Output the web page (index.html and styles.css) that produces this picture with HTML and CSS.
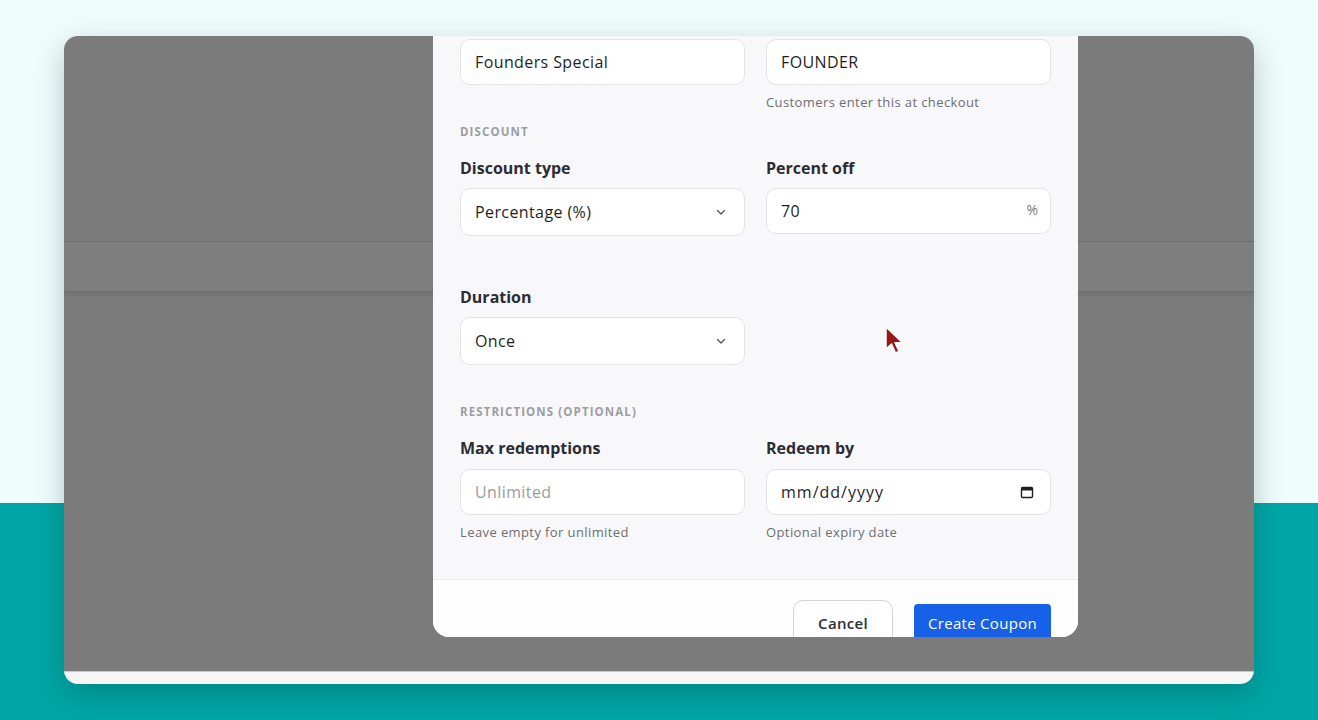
FILE: index.html
```html
<!DOCTYPE html>
<html lang="en">
<head>
  <meta charset="UTF-8" />
  <meta name="viewport" content="width=device-width, initial-scale=1.0"/>
  <title>Create Coupon</title>
  <link rel="stylesheet" href="styles.css">
</head>
<body>
  <div class="window">
    <div class="overlay">
      <div class="page-bar"></div>
    </div>
    <div class="window-foot"></div>

    <div class="modal">
      <div class="modal-body">
        <div class="grid">
          <div class="field">
            <input class="input" type="text" value="Founders Special" />
          </div>
          <div class="field">
            <input class="input" type="text" value="FOUNDER" />
            <p class="hint">Customers enter this at checkout</p>
          </div>
        </div>

        <h3 class="section">Discount</h3>
        <div class="grid">
          <div class="field">
            <label>Discount type</label>
            <div class="select">
              <span>Percentage (%)</span>
              <svg class="chev" width="12" height="12" viewBox="0 0 12 12"><path d="M2.5 4.5 6 8l3.5-3.5" fill="none" stroke="#555" stroke-width="1.3" stroke-linecap="round" stroke-linejoin="round"/></svg>
            </div>
          </div>
          <div class="field">
            <label>Percent off</label>
            <div class="suffix-wrap">
              <input class="input" type="text" value="70" />
              <span class="suffix">%</span>
            </div>
          </div>
        </div>

        <div class="grid duration">
          <div class="field">
            <label>Duration</label>
            <div class="select">
              <span>Once</span>
              <svg class="chev" width="12" height="12" viewBox="0 0 12 12"><path d="M2.5 4.5 6 8l3.5-3.5" fill="none" stroke="#555" stroke-width="1.3" stroke-linecap="round" stroke-linejoin="round"/></svg>
            </div>
          </div>
        </div>

        <h3 class="section restrictions">Restrictions (optional)</h3>
        <div class="grid limits">
          <div class="field">
            <label>Max redemptions</label>
            <input class="input" type="text" placeholder="Unlimited" />
            <p class="hint">Leave empty for unlimited</p>
          </div>
          <div class="field">
            <label>Redeem by</label>
            <div class="date">
              <span>mm/dd/yyyy</span>
              <svg width="14" height="14" viewBox="0 0 14 14"><rect x="1.5" y="2.5" width="11" height="10" rx="1.2" fill="none" stroke="#1f1f1f" stroke-width="1.4"/><rect x="1.5" y="2.5" width="11" height="3" fill="#1f1f1f"/></svg>
            </div>
            <p class="hint">Optional expiry date</p>
          </div>
        </div>
      </div>

      <div class="modal-foot">
        <button class="btn btn-cancel">Cancel</button>
        <button class="btn btn-primary">Create Coupon</button>
      </div>
    </div>

    <!-- mouse pointer -->
    <svg class="cursor" width="22" height="30" viewBox="0 0 22 30">
      <path d="M2 1v22l5.5-5 4 9 3.5-1.6-4-8.6h7.5z" fill="#9a1616" stroke="#fff" stroke-width="1.5" stroke-linejoin="round"/>
    </svg>
  </div>
</body>
</html>
```

FILE: styles.css
```css
body {
  margin: 0;
  height: 720px;
  overflow: hidden;
  font-family: "Open Sans", "Noto Sans", Arial, sans-serif;
  background: linear-gradient(#f0fdfd 0, #f0fdfd 503px, #00a6a6 503px);
  padding: 36px 64px 0;
  box-sizing: border-box;
}
.window {
  position: relative;
  height: 648px;
  border-radius: 14px;
  overflow: hidden;
  background: #f6f6f6;
  box-shadow: 0 10px 30px rgba(0,40,40,0.25);
}
.overlay {
  height: 636px;
  background: #7b7b7b;
  border-bottom: 1px solid #c9c9c9;
  padding-top: 205px;
  box-sizing: border-box;
}
.page-bar {
  height: 49px;
  border-top: 1px solid #6c6c6c;
  border-bottom: 1px solid #6e6e6e;
  background: #7e7e7e;
  box-shadow: 0 3px 4px rgba(0,0,0,0.08);
}
.modal {
  position: absolute;
  left: 369px;
  top: 0;
  width: 645px;
  height: 601px;
  background: #f8f8fa;
  border-radius: 0 0 16px 16px;
  overflow: hidden;
}
.modal-body {
  padding: 3px 27px 0;
  height: 543px;
  box-sizing: border-box;
}
.grid {
  display: grid;
  grid-template-columns: 285px 285px;
  column-gap: 21px;
}
.field label {
  display: block;
  font-size: 16px;
  font-weight: 700;
  color: #2b2d33;
  line-height: 20px;
  margin-bottom: 10px;
}
.limits .field label {
  margin-bottom: 11px;
}
.input, .select, .date {
  width: 100%;
  height: 46px;
  box-sizing: border-box;
  border: 1px solid #e3e3e6;
  border-radius: 10px;
  background: #fff;
  padding: 0 14px;
  font-family: inherit;
  font-size: 16px;
  letter-spacing: 0.4px;
  color: #1f1f1f;
  outline: none;
}
.input::placeholder {
  color: #9b9b9b;
}
.select, .date {
  display: flex;
  align-items: center;
  justify-content: space-between;
}
.select {
  height: 48px;
  padding-right: 17px;
}
.date {
  padding-right: 16px;
  letter-spacing: 1px;
}
.suffix-wrap {
  position: relative;
}
.suffix {
  position: absolute;
  right: 13px;
  top: 12px;
  font-size: 14px;
  color: #7a7a7a;
}
.hint {
  margin: 8px 0 0;
  font-size: 13px;
  letter-spacing: 0.4px;
  line-height: 18px;
  color: #6e6e73;
}
.section {
  margin: 13px 0 18px;
  font-size: 11.5px;
  font-weight: 700;
  letter-spacing: 1.1px;
  text-transform: uppercase;
  color: #9d9da3;
  line-height: 16px;
}
.duration {
  margin-top: 51px;
}
.restrictions {
  margin-top: 39px;
  margin-bottom: 18px;
}
.modal-foot {
  border-top: 1px solid #ececee;
  background: #fdfdfd;
  height: 100px;
  display: flex;
  justify-content: flex-end;
  align-items: flex-start;
  gap: 21px;
  padding: 20px 27px 0;
  box-sizing: border-box;
}
.btn {
  font-family: inherit;
  font-size: 15px;
  letter-spacing: 0.3px;
  border-radius: 10px;
  cursor: pointer;
}
.btn-cancel {
  height: 46px;
  width: 100px;
  background: #fff;
  border: 1px solid #d4d4d8;
  color: #2b2d33;
  font-weight: 600;
}
.btn-primary {
  margin-top: 4px;
  height: 38px;
  width: 137px;
  background: #1760e8;
  border: none;
  color: #fff;
  border-radius: 4px;
}
.cursor {
  position: absolute;
  left: 820px;
  top: 290px;
}
```
